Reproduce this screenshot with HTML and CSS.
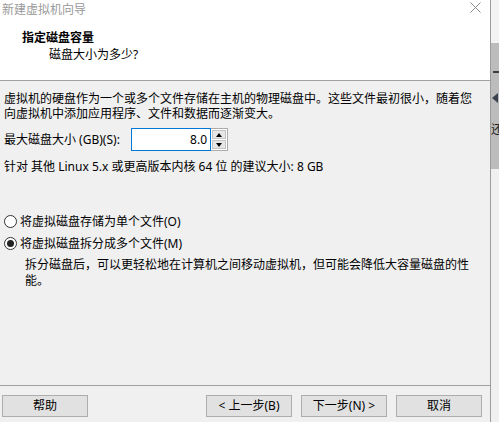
FILE: index.html
```html
<!DOCTYPE html>
<html lang="zh-CN">
<head>
<meta charset="utf-8">
<title>新建虚拟机向导</title>
<link rel="stylesheet" href="styles.css">
</head>
<body>
<div class="screen">
  <div class="window">
    <div class="header">
      <div class="titlebar">
        <span class="title">新建虚拟机向导</span>
        <svg class="close" width="11" height="11" viewBox="0 0 11 11"><path d="M0.5 0.5 L10.5 10.5 M10.5 0.5 L0.5 10.5" stroke="#8a8a8a" stroke-width="1" fill="none"/></svg>
      </div>
      <div class="heading">指定磁盘容量</div>
      <div class="subheading">磁盘大小为多少?</div>
    </div>
    <div class="content">
      <p class="intro">虚拟机的硬盘作为一个或多个文件存储在主机的物理磁盘中。这些文件最初很小，随着您<br>向虚拟机中添加应用程序、文件和数据而逐渐变大。</p>
      <div class="size-row">
        <span class="size-label">最大磁盘大小 (GB)(S):</span>
        <div class="spin-input">8.0</div>
        <div class="spin-buttons">
          <div class="spin-btn"><span class="tri-up"></span></div>
          <div class="spin-btn"><span class="tri-down"></span></div>
        </div>
      </div>
      <p class="recommend">针对 其他 Linux 5.x 或更高版本内核 64 位 的建议大小: 8 GB</p>
      <div class="radio-row first"><span class="radio"></span>将虚拟磁盘存储为单个文件(O)</div>
      <div class="radio-row"><span class="radio checked"></span>将虚拟磁盘拆分成多个文件(M)</div>
      <p class="option-desc">拆分磁盘后，可以更轻松地在计算机之间移动虚拟机，但可能会降低大容量磁盘的性<br>能。</p>
    </div>
    <div class="footer">
      <button class="btn">帮助</button>
      <div class="spacer"></div>
      <button class="btn">&lt; 上一步(B)</button>
      <button class="btn">下一步(N) &gt;</button>
      <button class="btn">取消</button>
    </div>
  </div>
  <div class="strip">
    <div class="strip-top"></div>
    <div class="strip-mid">
      <div class="strip-dash"></div>
      <div class="strip-arrow"></div>
      <div class="strip-char">还</div>
    </div>
    <div class="strip-bottom"></div>
  </div>
</div>
</body>
</html>
```

FILE: styles.css
```css
* { box-sizing: border-box; }
html, body { margin: 0; padding: 0; }
body {
  font-family: "Noto Sans", "Noto Sans CJK SC", sans-serif;
  font-size: 12px;
  color: #000;
  background: #f0f0f0;
}
.screen {
  display: flex;
  width: 499px;
  height: 422px;
  overflow: hidden;
}
.window {
  width: 491px;
  height: 422px;
  display: flex;
  flex-direction: column;
  background: #f0f0f0;
  border-right: 1px solid #9c9c9c;
}
.header {
  height: 81px;
  background: #fff;
  border-bottom: 1px solid #a0a0a0;
}
.titlebar {
  height: 20px;
  display: flex;
  align-items: center;
  justify-content: space-between;
  padding: 0 9px 0 2px;
}
.title {
  color: #999;
  line-height: 20px;
}
.close { margin-top: -5px; }
.heading {
  margin: 10px 0 0 22px;
  line-height: 16px;
  font-weight: bold;
}
.subheading {
  margin: 1px 0 0 49px;
  line-height: 16px;
}
.content {
  flex: 1;
  padding: 10px 4px 0 4px;
}
.intro {
  margin: 0;
  line-height: 15px;
}
.size-row {
  display: flex;
  align-items: center;
  margin-top: 7px;
  height: 23px;
}
.size-label {
  width: 127px;
  line-height: 15px;
}
.spin-input {
  width: 80px;
  height: 23px;
  border: 1px solid #0078d7;
  background: #fff;
  text-align: right;
  padding-right: 3px;
  line-height: 21px;
}
.spin-buttons {
  width: 17px;
  height: 23px;
  border: 1px solid #acacac;
  border-left: none;
  background: #fff;
  padding: 1px;
  display: flex;
  flex-direction: column;
  gap: 1px;
}
.spin-btn {
  flex: 1;
  background: #e6e6e6;
  border: 1px solid #c4c4c4;
  display: flex;
  align-items: center;
  justify-content: center;
}
.tri-up {
  width: 0; height: 0;
  border-left: 3px solid transparent;
  border-right: 3px solid transparent;
  border-bottom: 4px solid #000;
}
.tri-down {
  width: 0; height: 0;
  border-left: 3px solid transparent;
  border-right: 3px solid transparent;
  border-top: 4px solid #000;
}
.recommend {
  margin: 8px 0 0 0;
  line-height: 15px;
}
.radio-row {
  display: flex;
  align-items: center;
  height: 20px;
  margin-top: 2px;
}
.radio-row.first { margin-top: 37px; }
.radio {
  width: 13px;
  height: 13px;
  border: 1px solid #333;
  border-radius: 50%;
  background: #fff;
  margin-right: 3px;
  display: flex;
  align-items: center;
  justify-content: center;
}
.radio.checked::after {
  content: "";
  width: 7px;
  height: 7px;
  border-radius: 50%;
  background: #222;
}
.option-desc {
  margin: 4px 0 0 21px;
  line-height: 16px;
}
.footer {
  height: 37px;
  border-top: 1px solid #a0a0a0;
  padding: 9px 8px 0 2px;
  display: flex;
  align-items: flex-start;
  gap: 9px;
}
.spacer { flex: 1; }
.btn {
  width: 86px;
  height: 22px;
  background: #e1e1e1;
  border: 1px solid #adadad;
  font-family: "Noto Sans", "Noto Sans CJK SC", sans-serif;
  font-size: 12px;
  color: #000;
  padding: 0;
  line-height: 20px;
}
.strip {
  width: 8px;
  display: flex;
  flex-direction: column;
  overflow: hidden;
}
.strip-top { height: 43px; background: #f3f3f3; }
.strip-mid {
  height: 126px;
  background: #bcbcbc;
  display: flex;
  flex-direction: column;
  overflow: hidden;
}
.strip-dash {
  margin: 28px 0 0 2px;
  width: 6px;
  height: 2px;
  background: #3a3f48;
}
.strip-arrow {
  margin: 20px 0 0 1px;
  width: 0; height: 0;
  border-top: 5px solid transparent;
  border-bottom: 5px solid transparent;
  border-right: 6px solid #3a4250;
}
.strip-char {
  margin-top: 20px;
  line-height: 14px;
  white-space: nowrap;
  color: #222;
}
.strip-bottom { flex: 1; background: #f0f0f0; }
```
